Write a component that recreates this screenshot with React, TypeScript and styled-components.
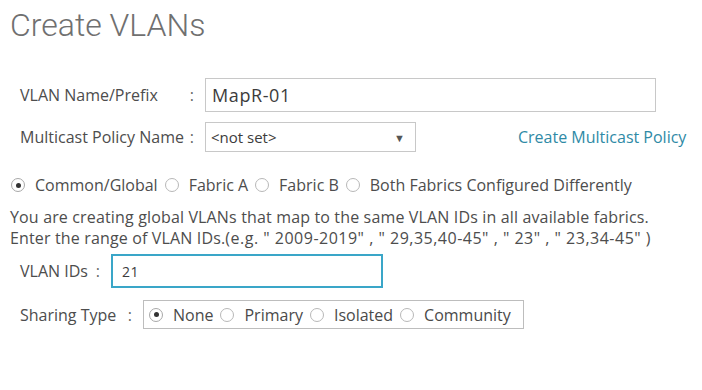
import React from 'react';
import styled, { createGlobalStyle } from 'styled-components';

const GlobalStyle = createGlobalStyle`
  body {
    margin: 0;
    background: #ffffff;
    font-family: "Open Sans", "Liberation Sans", Arial, sans-serif;
    color: #4a4a4a;
  }
`;

const Page = styled.div`
  width: 702px;
  height: 390px;
  padding: 0 10px;
  box-sizing: border-box;
  overflow: hidden;
`;

const Title = styled.h1`
  margin: 0;
  padding-top: 7px;
  height: 70px;
  box-sizing: border-box;
  font-family: Roboto, "Liberation Sans", sans-serif;
  font-weight: 300;
  font-size: 32px;
  line-height: 36px;
  color: #707070;
`;

const Row = styled.div<{ $top?: number }>`
  display: flex;
  align-items: center;
  margin-top: ${(p) => p.$top ?? 0}px;
  padding-left: 10px;
`;

const Label = styled.label<{ $width: number }>`
  display: flex;
  justify-content: space-between;
  width: ${(p) => p.$width}px;
  margin-right: 11px;
  font-size: 16px;
  line-height: 20px;
  color: #4d4d4d;
  white-space: nowrap;
`;

const Colon = styled.span`
  color: #666666;
`;

const TextInput = styled.input<{ $width: number; $focus?: boolean }>`
  width: ${(p) => p.$width}px;
  height: 34px;
  box-sizing: border-box;
  padding: 0 ${(p) => (p.$focus ? 9 : 6)}px;
  border: ${(p) => (p.$focus ? '2px solid #3aa6c8' : '1px solid #c8c8c8')};
  outline: none;
  font-family: "Open Sans", "Liberation Sans", Arial, sans-serif;
  font-size: ${(p) => (p.$focus ? '14px' : '18px')};
  letter-spacing: ${(p) => (p.$focus ? '0.5px' : '0.6px')};
  color: #3c3c3c;
  background: #ffffff;
`;

const Select = styled.div`
  display: flex;
  align-items: center;
  justify-content: space-between;
  width: 211px;
  height: 30px;
  box-sizing: border-box;
  padding: 0 10px 0 5px;
  border: 1px solid #c8c8c8;
  font-size: 15px;
  color: #3c3c3c;
`;

const Arrow = styled.span`
  font-size: 11px;
  color: #555555;
`;

const Link = styled.a`
  margin-left: 102px;
  font-size: 16px;
  color: #2f8aa6;
  text-decoration: none;
  white-space: nowrap;
`;

const RadioRow = styled.div<{ $top?: number }>`
  display: flex;
  align-items: center;
  margin-top: ${(p) => p.$top ?? 0}px;
  padding-left: 1px;
  font-size: 16px;
  line-height: 20px;
  color: #4d4d4d;
  white-space: nowrap;
`;

const RadioItem = styled.span`
  display: inline-flex;
  align-items: center;
  margin-right: 7px;
`;

const Circle = styled.span<{ $checked?: boolean }>`
  position: relative;
  width: 14px;
  height: 14px;
  box-sizing: border-box;
  margin-right: 10px;
  border: 1px solid ${(p) => (p.$checked ? '#a8a8a8' : '#b8b8b8')};
  border-radius: 50%;
  background: #ffffff;

  &::after {
    content: '';
    display: ${(p) => (p.$checked ? 'block' : 'none')};
    position: absolute;
    left: 3.5px;
    top: 3.5px;
    width: 5px;
    height: 5px;
    border-radius: 50%;
    background: #333333;
  }
`;

const Help = styled.p`
  margin: 12px 0 0;
  font-size: 16px;
  line-height: 21px;
  letter-spacing: 0.15px;
  color: #4d4d4d;
  white-space: nowrap;
`;

const Example = styled.span`
  letter-spacing: 0.5px;
`;

const SharingBox = styled.div`
  display: flex;
  align-items: center;
  height: 29px;
  width: 381px;
  box-sizing: border-box;
  padding-left: 5px;
  border: 1px solid #bdbdbd;
`;

type Option = { label: string; checked?: boolean };

const Radios = ({ options }: { options: Option[] }) => (
  <>
    {options.map((o) => (
      <RadioItem key={o.label}>
        <Circle $checked={o.checked} />
        {o.label}
      </RadioItem>
    ))}
  </>
);

export default function App() {
  return (
    <Page>
      <GlobalStyle />
      <Title>Create VLANs</Title>

      <Row $top={8}>
        <Label $width={174}>
          VLAN Name/Prefix<Colon>:</Colon>
        </Label>
        <TextInput $width={451} value="MapR-01" readOnly />
      </Row>

      <Row $top={10}>
        <Label $width={174}>
          Multicast Policy Name<Colon>:</Colon>
        </Label>
        <Select>
          &lt;not set&gt;
          <Arrow>▼</Arrow>
        </Select>
        <Link href="#">Create Multicast Policy</Link>
      </Row>

      <RadioRow $top={23}>
        <Radios
          options={[
            { label: 'Common/Global', checked: true },
            { label: 'Fabric A' },
            { label: 'Fabric B' },
            { label: 'Both Fabrics Configured Differently' },
          ]}
        />
      </RadioRow>

      <Help>
        You are creating global VLANs that map to the same VLAN IDs in all available fabrics.
        <br />
        Enter the range of VLAN IDs.
        <Example>(e.g. " 2009-2019" , " 29,35,40-45" , " 23" , " 23,34-45" )</Example>
      </Help>

      <Row $top={5}>
        <Label $width={80}>
          VLAN IDs<Colon>:</Colon>
        </Label>
        <TextInput $width={272} $focus value="21" readOnly />
      </Row>

      <Row $top={12}>
        <Label $width={112}>
          Sharing Type<Colon>:</Colon>
        </Label>
        <SharingBox>
          <Radios
            options={[
              { label: 'None', checked: true },
              { label: 'Primary' },
              { label: 'Isolated' },
              { label: 'Community' },
            ]}
          />
        </SharingBox>
      </Row>
    </Page>
  );
}
